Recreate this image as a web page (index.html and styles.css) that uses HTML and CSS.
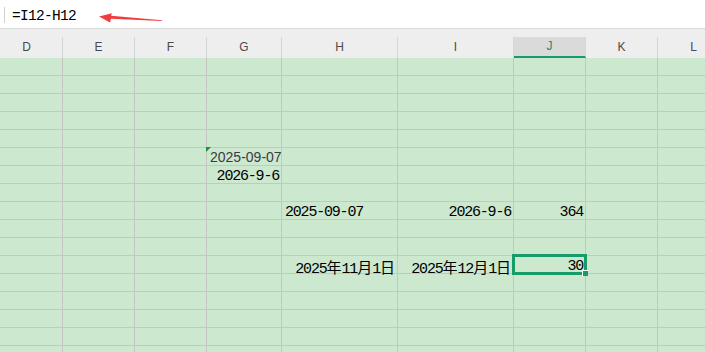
FILE: index.html
```html
<!DOCTYPE html>
<html lang="zh-CN">
<head>
    <meta charset="UTF-8">
    <meta name="viewport" content="width=device-width, initial-scale=1.0">
    <title>日期相减</title>
    <link rel="stylesheet" href="styles.css">
</head>
<body>
    <div class="formula-bar">
        <div class="fx-sep"></div>
        <div class="fx-text">=I12-H12</div>
        <!-- 标注箭头 -->
        <svg class="fx-arrow" width="70" height="14" viewBox="0 0 70 14">
            <polygon points="3,6.5 16,3.2 15,5.8 66,10.2 66,10.9 15,8.8 14,12.5" fill="#f03e3e"/>
        </svg>
    </div>

    <div class="col-header" id="col-header"></div>
    <div class="sheet" id="sheet"></div>

    <script>
        const cols = ['D', 'E', 'F', 'G', 'H', 'I', 'J', 'K', 'L'];
        const activeCol = 'J';
        const activeRow = 12;
        const rowCount = 17;

        // 单元格内容：行号 -> 列 -> [文本, 对齐, 额外class]
        const cells = {
            6: { G: ['2025-09-07', 'left', 'text-cell flag'] },
            7: { G: ['2026-9-6', 'right'] },
            9: { H: ['2025-09-07', 'left'], I: ['2026-9-6', 'right'], J: ['364', 'right'] },
            12: { H: ['2025年11月1日', 'right'], I: ['2025年12月1日', 'right'], J: ['30', 'right'] }
        };

        function formatText(text) {
            return text.replace(/([年月日])/g, '<span class="cjk">$1</span>');
        }

        const header = document.getElementById('col-header');
        cols.forEach(c => {
            const cls = c === activeCol ? 'hcell active' : 'hcell';
            header.innerHTML += `<div class="${cls}">${c}</div>`;
        });

        const sheet = document.getElementById('sheet');
        let html = '';
        for (let r = 1; r <= rowCount; r++) {
            cols.forEach(c => {
                const data = cells[r] && cells[r][c];
                let cls = 'cell';
                let inner = '';
                if (data) {
                    cls += ' ' + data[1];
                    if (data[2]) cls += ' ' + data[2];
                    inner = formatText(data[0]);
                }
                if (r === activeRow && c === activeCol) cls += ' selected';
                html += `<div class="${cls}">${inner}</div>`;
            });
        }
        sheet.innerHTML = html;
    </script>
</body>
</html>
```

FILE: styles.css
```css
body {
    margin: 0;
    width: 705px;
    height: 352px;
    overflow: hidden;
    background: #cce8cf;
    font-family: "Liberation Sans", Arial, sans-serif;
}
.formula-bar {
    position: relative;
    display: flex;
    height: 28px;
    background: #fff;
    border-bottom: 1px solid #d9d9d9;
}
.fx-sep {
    width: 1px;
    height: 16px;
    margin: 7px 0 0 4px;
    background: #d0d0d0;
}
.fx-text {
    margin-left: 7px;
    font-family: "Liberation Mono", monospace;
    font-size: 14.5px;
    letter-spacing: -0.7px;
    line-height: 32px;
    height: 28px;
    color: #000;
}
.fx-arrow {
    position: absolute;
    left: 96px;
    top: 10px;
}
.col-header,
.sheet {
    display: grid;
    grid-template-columns: 72px 72px 72px 75px 116px 116px 72px 72px 72px;
    margin-left: -9px;
}
.col-header {
    background: #eeeeee;
    padding-top: 8px;
    grid-template-rows: 21px;
}
.hcell {
    box-sizing: border-box;
    border-right: 1px solid #d6d6d6;
    text-align: center;
    font-size: 12px;
    line-height: 21px;
    color: #4a4a4a;
}
.hcell.active {
    background: #dadada;
    border-bottom: 2px solid #179b69;
    line-height: 19px;
    color: #1e8c64;
}
.sheet {
    grid-auto-rows: 18px;
}
.cell {
    position: relative;
    box-sizing: border-box;
    border-right: 1px solid #c6c6c6;
    border-bottom: 1px solid #c6c6c6;
    padding: 0 3px;
    font-family: "Liberation Mono", monospace;
    font-size: 15px;
    letter-spacing: -1.2px;
    line-height: 21px;
    white-space: nowrap;
    color: #000;
}
.cell.left {
    text-align: left;
}
.cell.right {
    text-align: right;
    padding-right: 2px;
}
.cjk {
    font-family: "Noto Sans CJK SC", sans-serif;
    letter-spacing: 0;
}
.text-cell {
    font-family: "Liberation Sans", Arial, sans-serif;
    font-size: 14px;
    letter-spacing: 0;
    line-height: 18px;
    color: #3a3a48;
}
.flag::before {
    content: "";
    position: absolute;
    left: -1px;
    top: -1px;
    border-top: 5px solid #1a8f3c;
    border-right: 5px solid transparent;
}
.selected {
    z-index: 1;
}
.selected::after {
    content: "";
    position: absolute;
    left: -2px;
    top: -2px;
    right: -2px;
    bottom: -2px;
    border: 3px solid #179b69;
    pointer-events: none;
}
.selected::before {
    content: "";
    position: absolute;
    right: -3px;
    bottom: -3px;
    width: 5px;
    height: 5px;
    background: #179b69;
    border-left: 1px solid #fff;
    border-top: 1px solid #fff;
    z-index: 2;
}
```
